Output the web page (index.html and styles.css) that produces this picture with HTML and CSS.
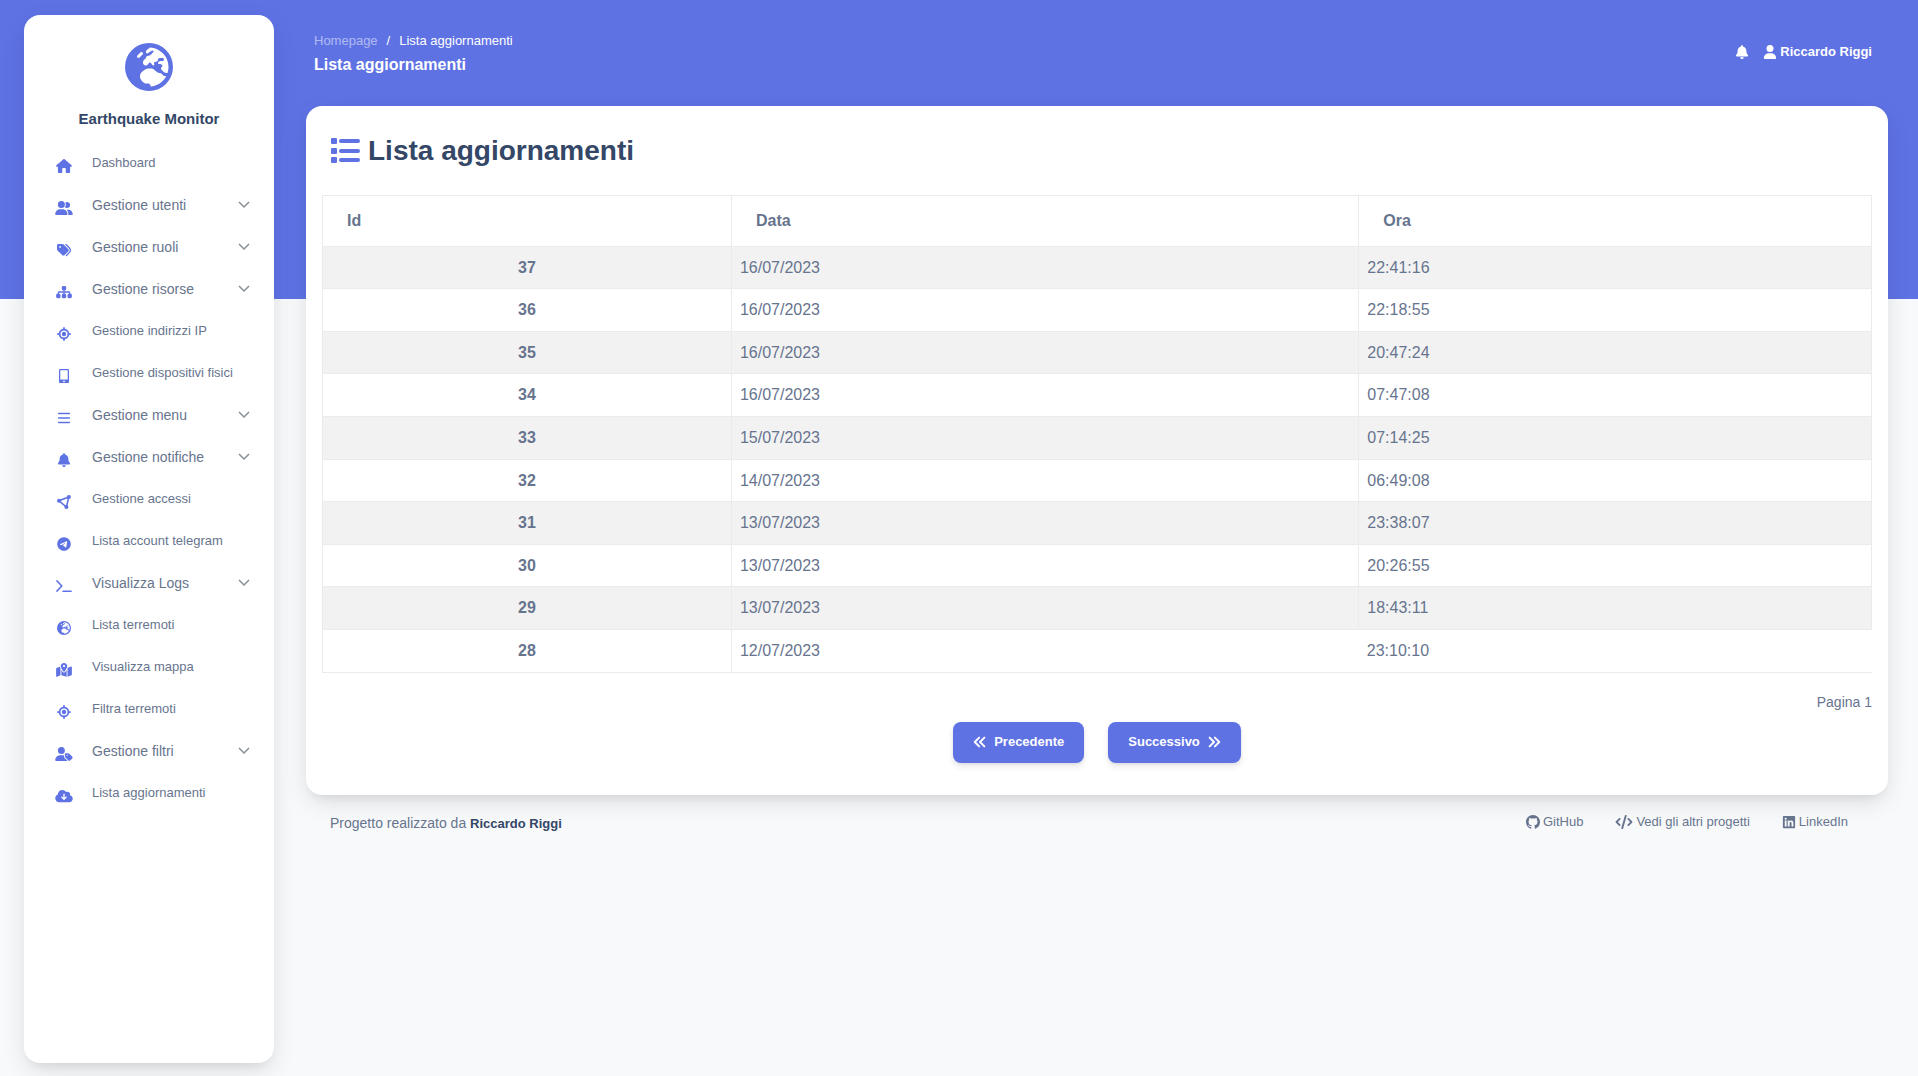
FILE: index.html
```html
<!DOCTYPE html>
<html lang="it">
<head>
<meta charset="utf-8">
<meta name="viewport" content="width=device-width, initial-scale=1">
<title>Lista aggiornamenti</title>
<link rel="stylesheet" href="styles.css">
</head>
<body>
<svg class="sprite" aria-hidden="true">
  <symbol id="earth" viewBox="0 0 512 512"><path d="M266.3 48.3L232.5 73.6c-5.4 4-8.5 10.4-8.5 17.1v9.1c0 6.8 5.5 12.3 12.3 12.3c2.4 0 4.8-.7 6.8-2.1l41.8-27.9c2-1.3 4.4-2.1 6.8-2.1h1c6.2 0 11.3 5.1 11.3 11.3c0 3-1.2 5.9-3.3 8l-19.9 19.9c-5.8 5.8-12.9 10.2-20.7 12.8l-26.5 8.8c-5.8 1.9-9.6 7.3-9.6 13.4c0 3.7-1.5 7.3-4.1 10l-17.9 17.9c-6.4 6.4-9.9 15-9.9 24v4.3c0 16.4 13.6 29.7 29.9 29.7c11 0 21.2-6.2 26.1-16l4-8.1c2.4-4.8 7.4-7.9 12.8-7.9c4.5 0 8.7 2.1 11.4 5.7l16.3 21.7c2.1 2.9 5.5 4.5 9.1 4.5c8.4 0 13.9-8.9 10.1-16.4l-1.1-2.3c-3.5-7 0-15.5 7.5-18l21.2-7.1c7.6-2.5 12.7-9.6 12.7-17.6c0-10.3 8.3-18.6 18.6-18.6H400c8.8 0 16 7.2 16 16s-7.2 16-16 16H379.3c-7.2 0-14.2 2.9-19.3 8l-4.7 4.7c-2.1 2.1-3.3 5-3.3 8c0 6.2 5.1 11.3 11.3 11.3h11.3c6 0 11.8 2.4 16 6.6l6.5 6.5c1.8 1.8 2.8 4.3 2.8 6.8s-1 5-2.8 6.8l-7.5 7.5C386 262 384 266.9 384 272s2 10 5.7 13.7L408 304c10.2 10.2 24.1 16 38.6 16H454c6.5-20.2 10-41.7 10-64c0-111.4-87.6-202.4-197.7-207.7zm172 307.9c-3.7-2.6-8.2-4.1-13-4.1c-6 0-11.8-2.4-16-6.6L396 332c-7.7-7.7-18-12-28.9-12c-9.7 0-19.2-3.5-26.6-9.8L314 287.4c-11.6-9.9-26.4-15.4-41.7-15.4H251.4c-12.6 0-25 3.7-35.5 10.7L188.5 301c-17.8 11.9-28.5 31.9-28.5 53.3v3.2c0 17 6.7 33.3 18.7 45.3l16 16c8.5 8.5 20 13.3 32 13.3H248c13.3 0 24 10.7 24 24c0 2.5 .4 5 1.1 7.3c71.3-5.8 132.5-47.6 165.2-107.2zM0 256a256 256 0 1 1 512 0A256 256 0 1 1 0 256zM187.3 100.7c-6.2-6.2-16.4-6.2-22.6 0l-32 32c-6.2 6.2-6.2 16.4 0 22.6s16.4 6.2 22.6 0l32-32c6.2-6.2 6.2-16.4 0-22.6z"/></symbol>
  <symbol id="house" viewBox="0 0 576 512"><path d="M575.8 255.5c0 18-15 32.1-32 32.1h-32l.7 160.2c0 2.700-.2 5.400-.5 8.100V472c0 22.100-17.900 40-40 40H392c-22.100 0-40-17.900-40-40V360c0-17.700-14.300-32-32-32h-64c-17.700 0-32 14.300-32 32v112c0 22.100-17.900 40-40 40H104c-22.100 0-40-17.900-40-40V287.600H32c-18 0-32-14-32-32.100c0-9 3-17 10-24L266.400 8c7-7 15-8 22-8s15 2 21 7L564.800 231.500c8 7 12 15 11 24z"/></symbol>
  <symbol id="users" viewBox="0 0 640 512"><path d="M96 128a128 128 0 1 1 256 0A128 128 0 1 1 96 128zM0 482.300C0 383.800 79.800 304 178.300 304h91.400C368.200 304 448 383.800 448 482.300c0 16.400-13.300 29.700-29.700 29.700H29.700C13.300 512 0 498.700 0 482.300zM609.300 512H471.400c5.400-9.400 8.600-20.300 8.600-32v-8c0-60.700-27.100-115.200-69.800-151.800c2.400-.1 4.700-.2 7.100-.2h61.400C567.800 320 640 392.200 640 481.300c0 17-13.800 30.700-30.700 30.700zM432 256c-31 0-59-12.600-79.300-32.900C372.400 196.500 384 163.600 384 128c0-26.800-6.600-52.100-18.300-74.300C384.300 40.100 407.200 32 432 32c61.900 0 112 50.100 112 112s-50.100 112-112 112z"/></symbol>
  <symbol id="tags" viewBox="0 0 512 512"><path d="M345 39.100L472.800 168.400c52.400 53 52.400 138.200 0 191.200L360.800 472.900c-9.300 9.400-24.500 9.500-33.900 .2s-9.500-24.500-.2-33.900L438.600 325.900c33.900-34.300 33.900-89.400 0-123.700L310.900 72.900c-9.300-9.400-9.200-24.600 .2-33.900s24.600-9.200 33.900 .2zM0 229.500V80C0 53.500 21.500 32 48 32H197.500c17 0 33.300 6.700 45.300 18.700l168 168c25 25 25 65.500 0 90.500L277.300 442.700c-25 25-65.500 25-90.500 0l-168-168C6.700 262.700 0 246.500 0 229.500zM144 144a32 32 0 1 0-64 0 32 32 0 1 0 64 0z"/></symbol>
  <symbol id="sitemap" viewBox="0 0 576 512"><path d="M208 80c0-26.500 21.500-48 48-48h64c26.500 0 48 21.500 48 48v64c0 26.500-21.500 48-48 48h-8v40H464c30.900 0 56 25.100 56 56v32h8c26.500 0 48 21.500 48 48v64c0 26.500-21.500 48-48 48H464c-26.500 0-48-21.500-48-48V368c0-26.500 21.500-48 48-48h8V288c0-4.400-3.600-8-8-8H312v40h8c26.500 0 48 21.500 48 48v64c0 26.500-21.500 48-48 48H256c-26.500 0-48-21.500-48-48V368c0-26.500 21.500-48 48-48h8V280H112c-4.400 0-8 3.600-8 8v32h8c26.500 0 48 21.500 48 48v64c0 26.500-21.500 48-48 48H48c-26.500 0-48-21.500-48-48V368c0-26.500 21.500-48 48-48h8V288c0-30.900 25.100-56 56-56H264V192h-8c-26.500 0-48-21.500-48-48V80z"/></symbol>
  <symbol id="crosshairs" viewBox="0 0 512 512"><path d="M256 0c17.700 0 32 14.300 32 32V66.700C368.400 80.100 431.900 143.600 445.300 224H480c17.700 0 32 14.300 32 32s-14.300 32-32 32H445.300C431.900 368.400 368.400 431.900 288 445.300V480c0 17.700-14.300 32-32 32s-32-14.300-32-32V445.300C143.600 431.900 80.100 368.400 66.700 288H32c-17.700 0-32-14.300-32-32s14.300-32 32-32H66.700C80.100 143.600 143.600 80.100 224 66.700V32c0-17.700 14.300-32 32-32zM128 256a128 128 0 1 0 256 0 128 128 0 1 0-256 0zm128-80a80 80 0 1 1 0 160 80 80 0 1 1 0-160z"/></symbol>
  <symbol id="mobile" viewBox="0 0 384 512"><path d="M8 48C8 21.500 29.500 0 56 0H328c26.500 0 48 21.500 48 48V464c0 26.500-21.500 48-48 48H56c-26.500 0-48-21.500-48-48V48zM160 448a32 32 0 1 0 64 0 32 32 0 1 0-64 0zM328 48H56V384H328V48z"/></symbol>
  <symbol id="bars" viewBox="0 0 448 512"><path d="M28 60H420a28 28 0 0 1 0 56H28a28 28 0 0 1 0-56zM28 228H420a28 28 0 0 1 0 56H28a28 28 0 0 1 0-56zM28 396H420a28 28 0 0 1 0 56H28a28 28 0 0 1 0-56z"/></symbol>
  <symbol id="bell" viewBox="0 0 448 512"><path d="M224 0c-17.700 0-32 14.300-32 32V51.200C119 66 64 130.600 64 208v18.800c0 47-17.300 92.400-48.500 127.600l-7.400 8.300c-8.400 9.400-10.400 22.900-5.300 34.400S19.400 416 32 416H416c12.600 0 24-7.400 29.200-18.900s3.100-25-5.300-34.400l-7.400-8.300C401.300 319.200 384 273.900 384 226.800V208c0-77.400-55-142-128-156.800V32c0-17.700-14.300-32-32-32zm45.300 493.300c12-12 18.700-28.300 18.700-45.300H224 160c0 17 6.700 33.300 18.700 45.300s28.300 18.700 45.300 18.700s33.300-6.700 45.300-18.700z"/></symbol>
  <symbol id="nodes" viewBox="0 0 512 512"><path d="M75 210L435 70L344 440Z" fill="none" stroke="currentColor" stroke-width="58"/><circle cx="75" cy="210" r="74"/><circle cx="435" cy="74" r="74"/><circle cx="344" cy="438" r="74"/></symbol>
  <symbol id="telegram" viewBox="0 0 496 512"><path d="M248 8C111 8 0 119 0 256S111 504 248 504 496 393 496 256 385 8 248 8zM363 176.700c-3.700 39.200-19.900 134.400-28.100 178.300-3.500 18.600-10.300 24.800-16.900 25.400-14.400 1.300-25.300-9.500-39.300-18.700-21.800-14.300-34.200-23.200-55.300-37.200-24.500-16.100-8.600-25 5.300-39.500 3.700-3.800 67.100-61.500 68.300-66.700 .2-.7 .3-3.100-1.200-4.400s-3.600-.8-5.100-.5q-3.300 .7-104.600 69.100-14.800 10.200-26.900 9.900c-8.900-.2-25.900-5-38.600-9.100-15.500-5-27.900-7.700-26.800-16.300q.8-6.700 18.500-13.700 108.400-47.200 144.600-62.300c68.900-28.600 83.200-33.600 92.500-33.800 2.100 0 6.600 .5 9.600 2.900a10.500 10.500 0 0 1 3.500 6.700A43.800 43.800 0 0 1 363 176.700z"/></symbol>
  <symbol id="terminal" viewBox="0 0 576 512"><path d="M32 72L208 256L32 440M256 448H544" fill="none" stroke="currentColor" stroke-width="62" stroke-linecap="round" stroke-linejoin="round"/></symbol>
  <symbol id="map" viewBox="0 0 576 512"><path d="M408 120c0 54.600-73.100 151.900-105.200 192c-7.700 9.600-22 9.600-29.600 0C241.100 271.900 168 174.600 168 120C168 53.700 221.700 0 288 0s120 53.700 120 120zm8 80.400c3.500-6.900 6.700-13.800 9.600-20.600c.5-1.200 1-2.500 1.500-3.700l116-46.400C558.900 123.400 576 135 576 152V422.800c0 9.800-6 18.600-15.100 22.300L416 503V200.400zM137.600 138.300c2.400 14.100 7.200 28.300 12.800 41.500c2.900 6.800 6.100 13.700 9.600 20.600V451.800L32.900 502.700C17.100 509 0 497.400 0 480.400V209.600c0-9.800 6-18.600 15.100-22.300l122.600-49zM327.800 332c13.900-17.400 35.700-45.700 56.200-77V504.300L192 449.400V255c20.500 31.300 42.300 59.600 56.200 77c20.500 25.600 59.100 25.600 79.600 0zM288 152a40 40 0 1 0 0-80 40 40 0 1 0 0 80z"/></symbol>
  <symbol id="user-tag" viewBox="0 0 640 512"><path d="M224 256A128 128 0 1 0 224 0a128 128 0 1 0 0 256zm-45.700 48C79.800 304 0 383.800 0 482.300C0 498.700 13.300 512 29.700 512H418.300c10 0 18.800-4.900 24.200-12.500l-99.200-99.200c-14.900-14.900-23.300-35.100-23.300-56.100v-33c-15.900-4.700-32.800-7.200-50.300-7.200H178.300zM384 224c-17.700 0-32 14.300-32 32v82.700c0 17 6.700 33.300 18.700 45.300L478.100 491.300c18.700 18.700 49.100 18.700 67.900 0l73.400-73.400c18.700-18.700 18.700-49.100 0-67.900L512 242.700c-12-12-28.300-18.700-45.300-18.700H384zm24 80a24 24 0 1 1 48 0 24 24 0 1 1-48 0z"/></symbol>
  <symbol id="cloud" viewBox="0 0 640 512"><path d="M144 480C64.500 480 0 415.500 0 336c0-62.800 40.200-116.200 96.200-135.900c-.1-2.700-.2-5.400-.2-8.100c0-88.400 71.600-160 160-160c59.300 0 111 32.200 138.700 80.200C409.900 102 428.300 96 448 96c53 0 96 43 96 96c0 12.200-2.300 23.800-6.400 34.600C596 238.400 640 290.100 640 352c0 70.700-57.300 128-128 128H144zm79-167l80 80c9.400 9.400 24.600 9.400 33.900 0l80-80c9.400-9.400 9.400-24.600 0-33.900s-24.600-9.400-33.900 0l-39 39V184c0-13.300-10.700-24-24-24s-24 10.700-24 24V318.100l-39-39c-9.400-9.400-24.600-9.400-33.900 0s-9.400 24.600 0 33.900z"/></symbol>
  <symbol id="chevron" viewBox="0 0 12 12"><path d="M1 3L6 8L11 3" fill="none" stroke="currentColor" stroke-width="1.500"/></symbol>
  <symbol id="user" viewBox="0 0 448 512"><path d="M224 256A128 128 0 1 0 224 0a128 128 0 1 0 0 256zm-45.700 48C79.800 304 0 383.800 0 482.300C0 498.700 13.300 512 29.700 512H418.300c16.400 0 29.700-13.300 29.700-29.700C448 383.800 368.200 304 269.700 304H178.300z"/></symbol>
  <symbol id="list" viewBox="0 0 30 30"><rect x="1" y="2" width="6" height="6" rx="1"/><rect x="1" y="12" width="6" height="6" rx="1"/><rect x="1" y="21" width="6" height="6" rx="1"/><rect x="9" y="3" width="21" height="4" rx="2"/><rect x="9" y="13" width="21" height="4" rx="2"/><rect x="9" y="22" width="21" height="4" rx="2"/></symbol>
  <symbol id="angles-left" viewBox="0 0 512 512"><path d="M224 96L64 256L224 416M416 96L256 256L416 416" fill="none" stroke="currentColor" stroke-width="72" stroke-linecap="round" stroke-linejoin="round"/></symbol>
  <symbol id="angles-right" viewBox="0 0 512 512"><path d="M96 96L256 256L96 416M288 96L448 256L288 416" fill="none" stroke="currentColor" stroke-width="72" stroke-linecap="round" stroke-linejoin="round"/></symbol>
  <symbol id="github" viewBox="0 0 16 16"><path d="M8 0C3.580 0 0 3.580 0 8c0 3.540 2.290 6.530 5.470 7.590.4.070.55-.17.55-.38 0-.19-.01-.82-.01-1.490-2.010.37-2.530-.49-2.690-.94-.09-.23-.48-.94-.82-1.130-.28-.15-.68-.52-.01-.53.63-.01 1.080.58 1.230.82.72 1.210 1.870.87 2.330.66.070-.52.28-.87.51-1.070-1.780-.2-3.640-.89-3.640-3.950 0-.87.31-1.590.82-2.150-.08-.2-.36-1.020.08-2.120 0 0 .67-.21 2.200.82.640-.18 1.320-.27 2-.27s1.360.09 2 .27c1.530-1.040 2.200-.82 2.200-.82.44 1.100.16 1.920.08 2.120.51.56.82 1.270.82 2.150 0 3.070-1.870 3.750-3.650 3.950.29.25.54.73.54 1.480 0 1.070-.01 1.930-.01 2.200 0 .21.15.46.55.38A8.010 8.010 0 0 0 16 8c0-4.420-3.580-8-8-8z"/></symbol>
  <symbol id="code" viewBox="0 0 640 512"><path d="M160 144L48 256L160 368M480 144L592 256L480 368M384 32L256 480" fill="none" stroke="currentColor" stroke-width="68" stroke-linecap="round" stroke-linejoin="round"/></symbol>
  <symbol id="linkedin" viewBox="0 0 448 512"><path d="M416 32H31.900C14.300 32 0 46.500 0 64.300v383.400C0 465.500 14.300 480 31.900 480H416c17.600 0 32-14.500 32-32.300V64.300c0-17.800-14.400-32.300-32-32.300zM135.400 416H69V202.200h66.500V416zm-33.200-243c-21.300 0-38.500-17.300-38.500-38.500S80.900 96 102.200 96c21.200 0 38.500 17.300 38.500 38.500 0 21.300-17.200 38.500-38.500 38.500zm282.100 243h-66.400V312c0-24.800-.5-56.700-34.500-56.700-34.600 0-39.900 27-39.900 54.900V416h-66.400V202.200h63.700v29.200h.9c8.900-16.800 30.600-34.500 62.900-34.500 67.200 0 79.700 44.300 79.700 101.900V416z"/></symbol>
</svg>

<div class="layout">
  <aside class="sidebar">
    <a class="brand" href="#">
      <svg class="brand-logo"><use href="#earth"/></svg>
      <span>Earthquake Monitor</span>
    </a>
    <nav class="menu" aria-label="Menu principale">
      <a class="item" href="#"><svg class="icon"><use href="#house"/></svg><span>Dashboard</span></a>
      <button class="item group" type="button"><svg class="icon"><use href="#users"/></svg><span>Gestione utenti</span><svg class="chevron"><use href="#chevron"/></svg></button>
      <button class="item group" type="button"><svg class="icon"><use href="#tags"/></svg><span>Gestione ruoli</span><svg class="chevron"><use href="#chevron"/></svg></button>
      <button class="item group" type="button"><svg class="icon"><use href="#sitemap"/></svg><span>Gestione risorse</span><svg class="chevron"><use href="#chevron"/></svg></button>
      <a class="item" href="#"><svg class="icon"><use href="#crosshairs"/></svg><span>Gestione indirizzi IP</span></a>
      <a class="item" href="#"><svg class="icon"><use href="#mobile"/></svg><span>Gestione dispositivi fisici</span></a>
      <button class="item group" type="button"><svg class="icon"><use href="#bars"/></svg><span>Gestione menu</span><svg class="chevron"><use href="#chevron"/></svg></button>
      <button class="item group" type="button"><svg class="icon"><use href="#bell"/></svg><span>Gestione notifiche</span><svg class="chevron"><use href="#chevron"/></svg></button>
      <a class="item" href="#"><svg class="icon"><use href="#nodes"/></svg><span>Gestione accessi</span></a>
      <a class="item" href="#"><svg class="icon"><use href="#telegram"/></svg><span>Lista account telegram</span></a>
      <button class="item group" type="button"><svg class="icon"><use href="#terminal"/></svg><span>Visualizza Logs</span><svg class="chevron"><use href="#chevron"/></svg></button>
      <a class="item" href="#"><svg class="icon"><use href="#earth"/></svg><span>Lista terremoti</span></a>
      <a class="item" href="#"><svg class="icon"><use href="#map"/></svg><span>Visualizza mappa</span></a>
      <a class="item" href="#"><svg class="icon"><use href="#crosshairs"/></svg><span>Filtra terremoti</span></a>
      <button class="item group" type="button"><svg class="icon"><use href="#user-tag"/></svg><span>Gestione filtri</span><svg class="chevron"><use href="#chevron"/></svg></button>
      <a class="item" href="#"><svg class="icon"><use href="#cloud"/></svg><span>Lista aggiornamenti</span></a>
    </nav>
  </aside>

  <div class="content">
    <header class="topbar">
      <div>
        <nav class="breadcrumb" aria-label="Percorso">
          <a href="#">Homepage</a><span>/</span><span>Lista aggiornamenti</span>
        </nav>
        <p class="page-name">Lista aggiornamenti</p>
      </div>
      <div class="account">
        <button class="bell" type="button" aria-label="Notifiche"><svg class="icon"><use href="#bell"/></svg></button>
        <a class="profile" href="#"><svg class="icon"><use href="#user"/></svg>Riccardo Riggi</a>
      </div>
    </header>

    <main class="card">
      <h1 class="title"><svg class="title-icon"><use href="#list"/></svg>Lista aggiornamenti</h1>
      <table class="updates">
        <colgroup><col class="col-id"><col class="col-date"><col class="col-time"></colgroup>
        <thead>
          <tr><th scope="col">Id</th><th scope="col">Data</th><th scope="col">Ora</th></tr>
        </thead>
        <tbody>
          <tr><th scope="row">37</th><td>16/07/2023</td><td>22:41:16</td></tr>
          <tr><th scope="row">36</th><td>16/07/2023</td><td>22:18:55</td></tr>
          <tr><th scope="row">35</th><td>16/07/2023</td><td>20:47:24</td></tr>
          <tr><th scope="row">34</th><td>16/07/2023</td><td>07:47:08</td></tr>
          <tr><th scope="row">33</th><td>15/07/2023</td><td>07:14:25</td></tr>
          <tr><th scope="row">32</th><td>14/07/2023</td><td>06:49:08</td></tr>
          <tr><th scope="row">31</th><td>13/07/2023</td><td>23:38:07</td></tr>
          <tr><th scope="row">30</th><td>13/07/2023</td><td>20:26:55</td></tr>
          <tr><th scope="row">29</th><td>13/07/2023</td><td>18:43:11</td></tr>
          <tr><th scope="row">28</th><td>12/07/2023</td><td>23:10:10</td></tr>
        </tbody>
      </table>
      <p class="page-number">Pagina 1</p>
      <div class="pager">
        <button class="btn" type="button"><svg class="icon"><use href="#angles-left"/></svg>Precedente</button>
        <button class="btn" type="button">Successivo<svg class="icon"><use href="#angles-right"/></svg></button>
      </div>
    </main>

    <footer class="footer">
      <p>Progetto realizzato da <a class="author" href="#">Riccardo Riggi</a></p>
      <nav class="links" aria-label="Collegamenti">
        <a href="#"><svg class="icon"><use href="#github"/></svg>GitHub</a>
        <a href="#"><svg class="icon wide"><use href="#code"/></svg>Vedi gli altri progetti</a>
        <a href="#"><svg class="icon"><use href="#linkedin"/></svg>LinkedIn</a>
      </nav>
    </footer>
  </div>
</div>
</body>
</html>
```
FILE: styles.css
```css
:root {
  --primary: #5e72e4;
  --dark: #344767;
  --text: #67748e;
  --border: #e9ecef;
  --shadow: 0 8px 26px -4px rgba(20, 20, 20, 0.15), 0 8px 9px -5px rgba(20, 20, 20, 0.06);
}

* {
  box-sizing: border-box;
}

body {
  margin: 0;
  font-family: "Liberation Sans", Arial, sans-serif;
  font-size: 14px;
  line-height: 24px;
  color: var(--text);
  background: linear-gradient(var(--primary) 299px, #f8f9fb 299px);
}

p,
h1 {
  margin: 0;
}

a {
  color: inherit;
  text-decoration: none;
}

button {
  border: 0;
  padding: 0;
  font: inherit;
  color: inherit;
  background: none;
  cursor: pointer;
}

svg {
  display: block;
  flex: none;
  fill: currentColor;
}

.sprite {
  display: none;
}

.icon {
  width: 14px;
  height: 14px;
}

.layout {
  display: flex;
  gap: 32px;
  min-height: 100vh;
  padding: 15px 30px 13px 24px;
}

/* Sidebar */

.sidebar {
  flex: none;
  width: 250px;
  padding-top: 28px;
  border-radius: 16px;
  background: #fff;
  box-shadow: var(--shadow);
}

.brand {
  display: flex;
  flex-direction: column;
  align-items: center;
  gap: 16px;
  font-size: 15px;
  font-weight: bold;
  color: var(--dark);
}

.brand-logo {
  width: 48px;
  height: 48px;
  color: var(--primary);
}

.menu {
  display: flex;
  flex-direction: column;
  padding: 11px 24px 0 31px;
}

.item {
  display: flex;
  align-items: center;
  gap: 19px;
  height: 42px;
  font-size: 13px;
  text-align: left;
}

.group {
  font-size: 14px;
}

.item .icon {
  width: 18px;
  margin-top: 6px;
  color: var(--primary);
}

.chevron {
  width: 12px;
  height: 12px;
  margin-left: auto;
  color: #8a8f94;
}

/* Page header */

.content {
  flex: 1;
  min-width: 0;
}

.topbar {
  display: flex;
  justify-content: space-between;
  align-items: center;
  height: 91px;
  padding: 0 16px 16px 8px;
  color: #fff;
}

.breadcrumb {
  display: flex;
  gap: 9px;
  font-size: 13px;
}

.breadcrumb a {
  opacity: 0.5;
}

.page-name {
  font-size: 16px;
  font-weight: bold;
}

.account,
.profile {
  display: flex;
  align-items: center;
}

.account {
  gap: 14px;
  padding-bottom: 2px;
}

.profile {
  gap: 3px;
  font-size: 13px;
  font-weight: bold;
}

/* Card */

.card {
  padding: 25px 16px 32px;
  border-radius: 16px;
  background: #fff;
  box-shadow: var(--shadow);
}

.title {
  display: flex;
  align-items: center;
  gap: 8px;
  padding: 0 8px;
  font-size: 28px;
  line-height: 40px;
  color: var(--dark);
}

.title-icon {
  width: 30px;
  height: 30px;
  color: var(--primary);
}

.updates {
  width: 100%;
  margin-top: 24px;
  border-collapse: collapse;
  table-layout: fixed;
  font-size: 16px;
  line-height: 1.6;
}

.col-id {
  width: 26.4%;
}

.col-date {
  width: 40.5%;
}

.updates th,
.updates td {
  padding: 8px;
  border: 1px solid var(--border);
}

.updates thead th {
  padding: 12px 24px;
  text-align: left;
}

.updates tbody tr:nth-child(odd) {
  background: #f2f2f2;
}

.updates tbody tr:last-child td {
  border-right: 0;
}

.updates tbody tr:last-child td:last-child {
  border-left: 0;
}

.page-number {
  margin-top: 17px;
  text-align: right;
}

.pager {
  display: flex;
  justify-content: center;
  gap: 24px;
  margin-top: 8px;
}

.btn {
  display: flex;
  align-items: center;
  gap: 7px;
  height: 41px;
  padding: 0 20px;
  border-radius: 8px;
  font-size: 13px;
  font-weight: bold;
  color: #fff;
  background: var(--primary);
  box-shadow: 0 4px 6px rgba(50, 50, 93, 0.1), 0 1px 3px rgba(0, 0, 0, 0.08);
}

/* Footer */

.footer {
  display: flex;
  justify-content: space-between;
  align-items: flex-start;
  padding: 16px 40px 0 24px;
}

.author {
  font-size: 13px;
  font-weight: bold;
  color: var(--dark);
}

.links {
  display: flex;
  gap: 32px;
  font-size: 13px;
  line-height: 22px;
}

.links a {
  display: flex;
  align-items: center;
  gap: 3px;
}

.links .wide {
  width: 18px;
}
```
